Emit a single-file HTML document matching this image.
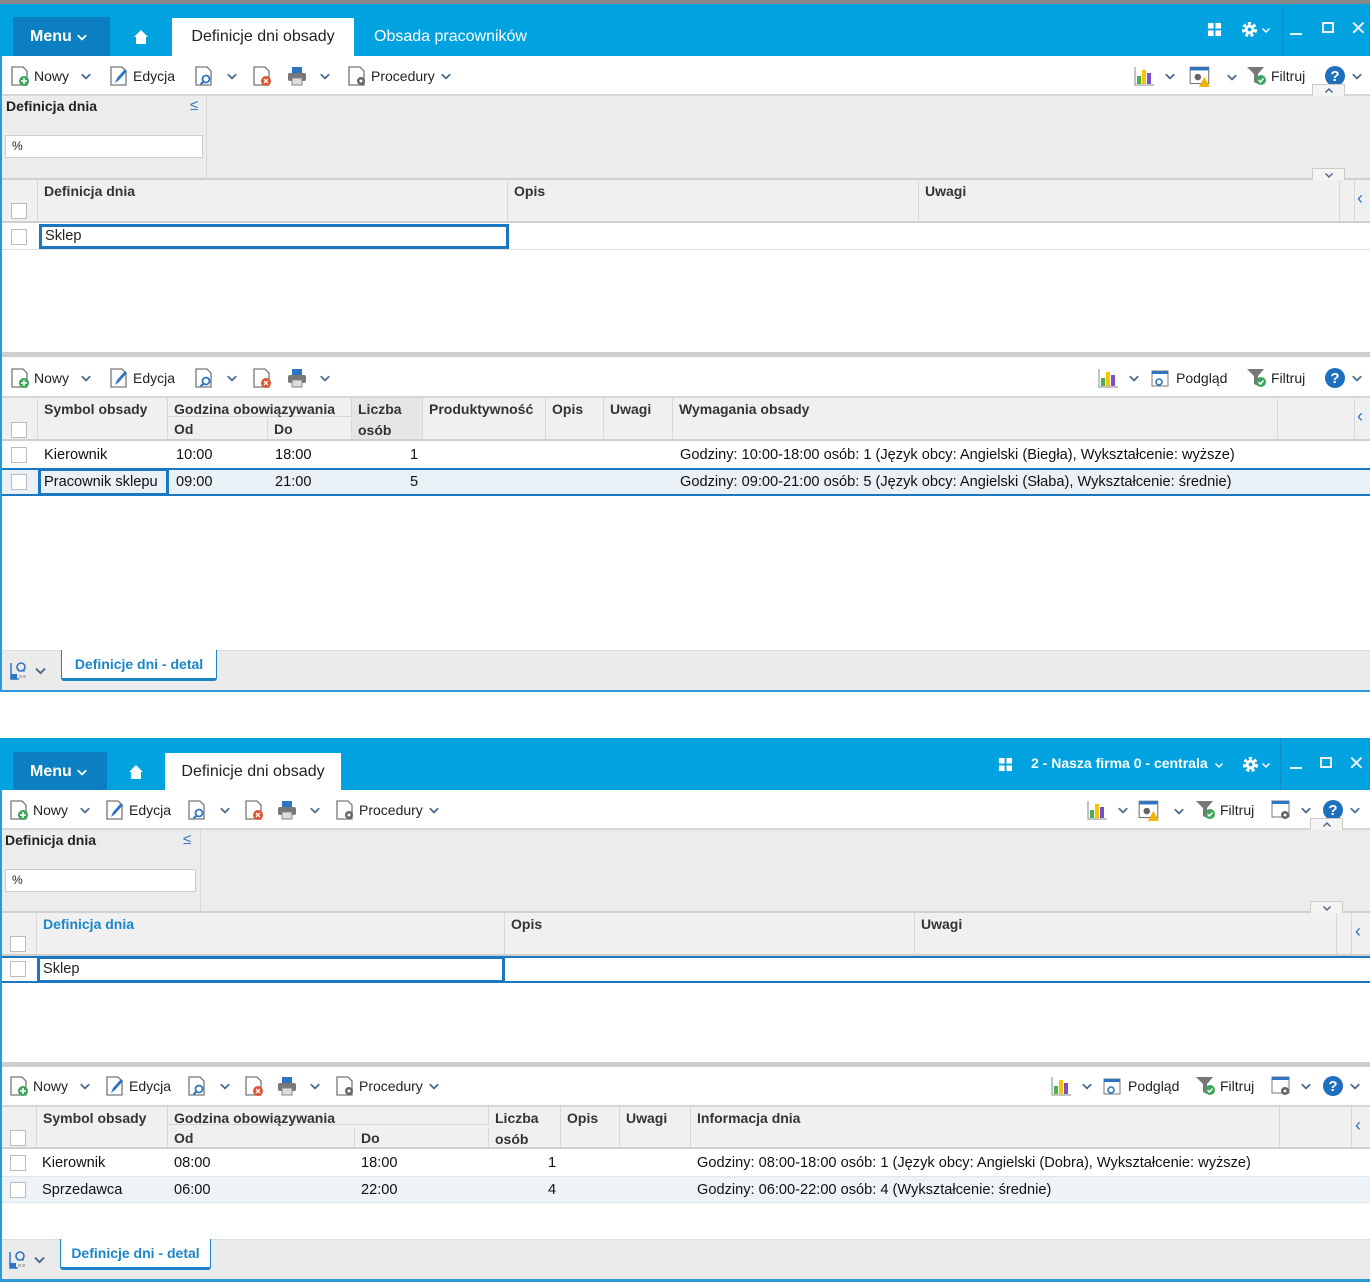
<!DOCTYPE html>
<html><head><meta charset="utf-8">
<style>
*{box-sizing:border-box;margin:0;padding:0}
body{width:1370px;height:1282px;position:relative;background:#fff;font-family:"Liberation Sans",Arial,sans-serif;font-size:14px;color:#222;overflow:hidden}
.a{position:absolute}
.blue{background:#00a3e0}
.menu{background:#0b7fc1;color:#fff;font-weight:bold;font-size:16px;padding-left:17px;line-height:39px}
.tab{background:#fff;font-size:16px;line-height:38px;text-align:center;color:#222}
.tb{background:#fff;border-bottom:2px solid #d6d6d6}
.filt{background:#ececec;border-bottom:2px solid #d0d0d0}
.hdr{background:#f0f0f0;border-bottom:2px solid #cfcfcf}
.col{position:absolute;top:0;bottom:0;border-right:1px solid #d8d8d8;font-weight:bold;color:#333;padding:3px 6px;font-size:14px}
.cb{position:absolute;width:16px;height:16px;border:1px solid #bbb;background:#fff}
.cell{position:absolute;font-size:14.6px;color:#111}
.bbar{background:#ebebeb;border-top:1px solid #ddd}
.dtab{background:#fff;border:1px solid #1a86c8;border-top:none;border-bottom:3px solid #1a86c8;border-radius:0 0 3px 3px;color:#1a86c8;font-weight:bold;text-align:center;line-height:28px;font-size:14px}
.ti{position:absolute;display:flex;align-items:center;gap:3px;font-size:14px;color:#222}
svg{display:block}
</style></head><body>
<svg width="0" height="0" style="position:absolute">
<defs>
<symbol id="chev" viewBox="0 0 10 10"><polyline points="1.5,3.5 5,7 8.5,3.5" fill="none" stroke="#4a6a90" stroke-width="1.5"/></symbol>
<symbol id="chevw" viewBox="0 0 10 10"><polyline points="1.5,3.5 5,7 8.5,3.5" fill="none" stroke="#fff" stroke-width="1.5"/></symbol>
<symbol id="new" viewBox="0 0 22 22"><path d="M3 2h11l4 4v14H3z" fill="#fff" stroke="#777" stroke-width="1.3"/><circle cx="15" cy="16" r="5" fill="#3da35a"/><path d="M15 13v6M12 16h6" stroke="#fff" stroke-width="1.6"/></symbol>
<symbol id="edit" viewBox="0 0 22 22"><path d="M3 2h11l4 4v14H3z" fill="#fff" stroke="#777" stroke-width="1.3"/><path d="M7 18l2-5 8-9 2 2-8 9z" fill="#2d74c4"/></symbol>
<symbol id="find" viewBox="0 0 22 22"><path d="M3 2h11l4 4v14H3z" fill="#fff" stroke="#777" stroke-width="1.3"/><circle cx="13" cy="14" r="3.5" fill="none" stroke="#2d74c4" stroke-width="1.8"/><path d="M10.5 16.5l-3 3" stroke="#2d74c4" stroke-width="2"/></symbol>
<symbol id="del" viewBox="0 0 22 22"><path d="M3 2h11l4 4v14H3z" fill="#fff" stroke="#777" stroke-width="1.3"/><circle cx="15" cy="16" r="5" fill="#e0512f"/><path d="M13 14l4 4M17 14l-4 4" stroke="#fff" stroke-width="1.4"/></symbol>
<symbol id="proc" viewBox="0 0 22 22"><path d="M3 2h11l4 4v14H3z" fill="#fff" stroke="#777" stroke-width="1.3"/><circle cx="15" cy="16" r="4" fill="#666"/><circle cx="15" cy="16" r="1.5" fill="#fff"/></symbol>
<symbol id="print" viewBox="0 0 22 22"><rect x="6" y="2" width="10" height="6" fill="#2d74c4"/><rect x="2" y="8" width="18" height="8" rx="2" fill="#777"/><rect x="6" y="13" width="10" height="7" fill="#ddd" stroke="#888"/></symbol>
<symbol id="chart" viewBox="0 0 22 22"><path d="M2 2v18h19" stroke="#888" fill="none"/><rect x="4" y="11" width="4" height="8" fill="#4caf50"/><rect x="9" y="5" width="4" height="14" fill="#f7c600"/><rect x="14" y="8" width="4" height="11" fill="#7b4fc9"/></symbol>
<symbol id="filter" viewBox="0 0 22 22"><path d="M1 2h17l-6 7v10l-4-2V9z" fill="#777"/><circle cx="15" cy="15" r="5" fill="#3da35a"/><path d="M12.5 15l2 2 3-3.5" stroke="#fff" stroke-width="1.5" fill="none"/></symbol>
<symbol id="help" viewBox="0 0 22 22"><circle cx="11" cy="11" r="10" fill="#1f6fbf"/><text x="11" y="16" text-anchor="middle" font-family="Liberation Sans" font-weight="bold" font-size="15" fill="#fff">?</text></symbol>
<symbol id="win" viewBox="0 0 22 22"><rect x="2" y="2" width="17" height="15" fill="#fff" stroke="#777"/><rect x="2" y="2" width="17" height="3" fill="#2d74c4"/><circle cx="9" cy="11" r="3" fill="#666"/><path d="M15 11l5 9h-10z" fill="#f0b400"/></symbol>
<symbol id="wing" viewBox="0 0 22 22"><rect x="2" y="2" width="17" height="16" fill="#fff" stroke="#777"/><rect x="2" y="2" width="17" height="3" fill="#2d74c4"/><circle cx="15" cy="16" r="4" fill="#666"/><circle cx="15" cy="16" r="1.4" fill="#fff"/></symbol>
<symbol id="prev" viewBox="0 0 22 22"><rect x="2" y="4" width="16" height="15" fill="#fff" stroke="#777"/><rect x="2" y="4" width="16" height="3" fill="#2d74c4"/><circle cx="9" cy="15" r="3" fill="none" stroke="#2d74c4" stroke-width="1.6"/></symbol>
<symbol id="grid" viewBox="0 0 16 16"><rect x="1" y="1" width="6" height="6" fill="#fff"/><rect x="9" y="1" width="6" height="6" fill="#fff"/><rect x="1" y="9" width="6" height="6" fill="#fff"/><rect x="9" y="9" width="6" height="6" fill="#fff"/></symbol>
<symbol id="gear" viewBox="0 0 20 20"><circle cx="10" cy="10" r="6" fill="none" stroke="#fff" stroke-width="4" stroke-dasharray="3 2.3"/><circle cx="10" cy="10" r="5" fill="#fff"/><circle cx="10" cy="10" r="2" fill="#00a3e0"/></symbol>
<symbol id="home" viewBox="0 0 16 16"><path d="M8 1l7 7h-2v7H3V8H1z" fill="#fff"/></symbol>
<symbol id="lupa" viewBox="0 0 22 22"><path d="M2 4v16h8" stroke="#2d74c4" fill="none" stroke-width="1.5"/><rect x="2" y="15" width="6" height="5" fill="#2d74c4"/><circle cx="12" cy="8" r="4" fill="none" stroke="#2d74c4" stroke-width="1.6"/><path d="M9 12h7" stroke="#2d74c4"/><rect x="10" y="16" width="3" height="3" fill="#bbb"/><rect x="14" y="16" width="3" height="3" fill="#bbb"/></symbol>
</defs></svg>

<!-- ========== WINDOW 1 ========== -->
<div class="a" style="left:0;top:0;width:1370px;height:4px;background:#888"></div>
<div class="a blue" style="left:0;top:4px;width:1370px;height:52px"></div>
<div class="a menu" style="left:13px;top:17px;width:97px;height:39px">Menu <svg style="display:inline;vertical-align:middle" width="12" height="12"><use href="#chevw"/></svg></div>
<svg class="a" style="left:133px;top:29px" width="16" height="16"><use href="#home"/></svg>
<div class="a tab" style="left:172px;top:18px;width:182px;height:38px">Definicje dni obsady</div>
<div class="a" style="left:374px;top:18px;line-height:38px;font-size:16px;color:#fff">Obsada pracowników</div>
<svg class="a" style="left:1207px;top:22px" width="15" height="15"><use href="#grid"/></svg>
<svg class="a" style="left:1240px;top:20px" width="19" height="19"><use href="#gear"/></svg>
<svg class="a" style="left:1261px;top:25px" width="10" height="10"><use href="#chevw"/></svg>
<div class="a" style="left:1282px;top:4px;width:1px;height:52px;background:#0a8cc4"></div>
<div class="a" style="left:1290px;top:33px;width:12px;height:2px;background:#dff"></div>
<div class="a" style="left:1322px;top:22px;width:12px;height:11px;border:2px solid #eef"></div>
<div class="a" style="left:1350px;top:16px;color:#eef;font-size:20px">✕</div>

<div class="a tb" style="left:0;top:56px;width:1370px;height:40px"></div>
<div class="ti" style="left:9px;top:65px"><svg width="22" height="22"><use href="#new"/></svg>Nowy<svg width="12" height="12" style="margin-left:8px"><use href="#chev"/></svg></div>
<div class="ti" style="left:108px;top:65px"><svg width="22" height="22"><use href="#edit"/></svg>Edycja</div>
<div class="ti" style="left:193px;top:65px"><svg width="22" height="22"><use href="#find"/></svg><svg width="12" height="12" style="margin-left:8px"><use href="#chev"/></svg></div>
<div class="ti" style="left:251px;top:65px"><svg width="22" height="22"><use href="#del"/></svg></div>
<div class="ti" style="left:286px;top:65px"><svg width="22" height="22"><use href="#print"/></svg><svg width="12" height="12" style="margin-left:8px"><use href="#chev"/></svg></div>
<div class="ti" style="left:346px;top:65px"><svg width="22" height="22"><use href="#proc"/></svg>Procedury<svg width="12" height="12" style="margin-left:2px"><use href="#chev"/></svg></div>
<div class="ti" style="left:1133px;top:65px"><svg width="22" height="22"><use href="#chart"/></svg><svg width="12" height="12" style="margin-left:6px"><use href="#chev"/></svg></div>
<div class="ti" style="left:1187px;top:65px"><svg width="26" height="24"><use href="#win"/></svg><svg width="12" height="12" style="margin-left:10px"><use href="#chev"/></svg></div>
<div class="ti" style="left:1246px;top:65px"><svg width="22" height="22"><use href="#filter"/></svg>Filtruj</div>
<div class="ti" style="left:1324px;top:65px"><svg width="22" height="22"><use href="#help"/></svg><svg width="12" height="12" style="margin-left:2px"><use href="#chev"/></svg></div>

<div class="a filt" style="left:0;top:96px;width:1370px;height:84px"></div>
<div class="a" style="left:206px;top:96px;width:1px;height:84px;background:#d8d8d8"></div>
<div class="a" style="left:6px;top:98px;font-weight:bold">Definicja dnia</div>
<div class="a" style="left:190px;top:97px;color:#2d74c4;font-size:15px">≤</div>
<div class="a" style="left:5px;top:135px;width:198px;height:23px;background:#fff;border:1px solid #ccc;font-size:12px;padding:3px 6px">%</div>
<div class="a" style="left:1312px;top:84px;width:33px;height:12px;background:#f4f4f4;border:1px solid #ccc;border-bottom:none"><svg style="margin:1px auto" width="12" height="10"><use href="#chev" transform="rotate(180 6 5)"/></svg></div>
<div class="a" style="left:1312px;top:168px;width:33px;height:12px;background:#f4f4f4;border:1px solid #ccc;border-bottom:none"><svg style="margin:1px auto" width="12" height="10"><use href="#chev"/></svg></div>

<div class="a hdr" style="left:0;top:180px;width:1370px;height:43px">
<div class="col" style="left:0;width:38px"></div>
<div class="col" style="left:38px;width:470px">Definicja dnia</div>
<div class="col" style="left:508px;width:411px">Opis</div>
<div class="col" style="left:919px;width:421px">Uwagi</div>
<div class="col" style="left:1340px;width:15px"></div>
<div class="a" style="left:1357px;top:8px;color:#2d74c4;font-size:18px">‹</div>
</div>
<div class="cb" style="left:11px;top:203px"></div>
<div class="a" style="left:0;top:249px;width:1370px;height:1px;background:#e0e0e0"></div>
<div class="cb" style="left:11px;top:229px"></div>
<div class="a" style="left:39px;top:224px;width:470px;height:25px;border:3px solid #1a78c2;padding:1px 3px;font-size:14.6px">Sklep</div>

<div class="a" style="left:0;top:352px;width:1370px;height:5px;background:#cfcfcf"></div>
<div class="a tb" style="left:0;top:357px;width:1370px;height:41px"></div>
<div class="ti" style="left:9px;top:367px"><svg width="22" height="22"><use href="#new"/></svg>Nowy<svg width="12" height="12" style="margin-left:8px"><use href="#chev"/></svg></div>
<div class="ti" style="left:108px;top:367px"><svg width="22" height="22"><use href="#edit"/></svg>Edycja</div>
<div class="ti" style="left:193px;top:367px"><svg width="22" height="22"><use href="#find"/></svg><svg width="12" height="12" style="margin-left:8px"><use href="#chev"/></svg></div>
<div class="ti" style="left:251px;top:367px"><svg width="22" height="22"><use href="#del"/></svg></div>
<div class="ti" style="left:286px;top:367px"><svg width="22" height="22"><use href="#print"/></svg><svg width="12" height="12" style="margin-left:8px"><use href="#chev"/></svg></div>
<div class="ti" style="left:1097px;top:367px"><svg width="22" height="22"><use href="#chart"/></svg><svg width="12" height="12" style="margin-left:6px"><use href="#chev"/></svg></div>
<div class="ti" style="left:1149px;top:367px"><svg width="24" height="22"><use href="#prev"/></svg>Podgląd</div>
<div class="ti" style="left:1246px;top:367px"><svg width="22" height="22"><use href="#filter"/></svg>Filtruj</div>
<div class="ti" style="left:1324px;top:367px"><svg width="22" height="22"><use href="#help"/></svg><svg width="12" height="12" style="margin-left:2px"><use href="#chev"/></svg></div>

<div class="a hdr" style="left:0;top:398px;width:1370px;height:43px">
<div class="col" style="left:0;width:38px"></div>
<div class="col" style="left:38px;width:130px">Symbol obsady</div>
<div class="col" style="left:168px;width:184px;bottom:22px;border-bottom:1px solid #d8d8d8">Godzina obowiązywania</div>
<div class="col" style="left:168px;top:21px;width:100px;padding-top:2px">Od</div>
<div class="col" style="left:268px;top:21px;width:84px;padding-top:2px">Do</div>
<div class="col" style="left:352px;width:71px;line-height:21px;padding-top:1px;background:#e6e6e6">Liczba<br>osób</div>
<div class="col" style="left:423px;width:123px">Produktywność</div>
<div class="col" style="left:546px;width:58px">Opis</div>
<div class="col" style="left:604px;width:69px">Uwagi</div>
<div class="col" style="left:673px;width:605px">Wymagania obsady</div>
<div class="col" style="left:1278px;width:77px"></div>
<div class="a" style="left:1357px;top:8px;color:#2d74c4;font-size:18px">‹</div>
</div>
<div class="cb" style="left:11px;top:422px"></div>
<div class="cb" style="left:11px;top:447px"></div>
<div class="cell" style="left:44px;top:447px">Kierownik</div>
<div class="cell" style="left:176px;top:447px">10:00</div>
<div class="cell" style="left:275px;top:447px">18:00</div>
<div class="cell" style="left:410px;top:447px">1</div>
<div class="cell" style="left:680px;top:447px">Godziny: 10:00-18:00 osób: 1 (Język obcy: Angielski (Biegła), Wykształcenie: wyższe)</div>
<div class="a" style="left:0;top:468px;width:1370px;height:28px;background:#e9f1f7;border-top:2px solid #1a78c2;border-bottom:2px solid #1a78c2"></div>
<div class="cb" style="left:11px;top:474px"></div>
<div class="a" style="left:38px;top:468px;width:131px;height:28px;border:3px solid #1a78c2"></div>
<div class="cell" style="left:44px;top:474px">Pracownik sklepu</div>
<div class="cell" style="left:176px;top:474px">09:00</div>
<div class="cell" style="left:275px;top:474px">21:00</div>
<div class="cell" style="left:410px;top:474px">5</div>
<div class="cell" style="left:680px;top:474px">Godziny: 09:00-21:00 osób: 5 (Język obcy: Angielski (Słaba), Wykształcenie: średnie)</div>

<div class="a bbar" style="left:0;top:650px;width:1370px;height:40px"></div>
<svg class="a" style="left:9px;top:659px" width="22" height="22"><use href="#lupa"/></svg>
<svg class="a" style="left:34px;top:664px" width="13" height="13"><use href="#chev"/></svg>
<div class="a dtab" style="left:61px;top:650px;width:156px;height:31px">Definicje dni - detal</div>
<div class="a" style="left:0;top:690px;width:1370px;height:2px;background:#2a9ad6"></div>
<div class="a" style="left:0;top:56px;width:2px;height:636px;background:#2a9ad6"></div>

<!-- ========== WINDOW 2 ========== -->
<div class="a blue" style="left:0;top:738px;width:1370px;height:52px"></div>
<div class="a menu" style="left:13px;top:752px;width:94px;height:38px">Menu <svg style="display:inline;vertical-align:middle" width="12" height="12"><use href="#chevw"/></svg></div>
<svg class="a" style="left:128px;top:764px" width="16" height="16"><use href="#home"/></svg>
<div class="a tab" style="left:165px;top:753px;width:176px;height:37px">Definicje dni obsady</div>
<svg class="a" style="left:998px;top:757px" width="15" height="15"><use href="#grid"/></svg>
<div class="a" style="left:1031px;top:755px;color:#fff;font-weight:bold;font-size:14px">2 - Nasza firma 0 - centrala</div>
<svg class="a" style="left:1214px;top:760px" width="10" height="10"><use href="#chevw"/></svg>
<svg class="a" style="left:1241px;top:755px" width="19" height="19"><use href="#gear"/></svg>
<svg class="a" style="left:1261px;top:760px" width="10" height="10"><use href="#chevw"/></svg>
<div class="a" style="left:1280px;top:738px;width:1px;height:52px;background:#0a8cc4"></div>
<div class="a" style="left:1290px;top:767px;width:12px;height:2px;background:#dff"></div>
<div class="a" style="left:1320px;top:757px;width:12px;height:11px;border:2px solid #eef"></div>
<div class="a" style="left:1348px;top:751px;color:#eef;font-size:20px">✕</div>

<div class="a tb" style="left:0;top:790px;width:1370px;height:40px"></div>
<div class="ti" style="left:8px;top:799px"><svg width="22" height="22"><use href="#new"/></svg>Nowy<svg width="12" height="12" style="margin-left:8px"><use href="#chev"/></svg></div>
<div class="ti" style="left:104px;top:799px"><svg width="22" height="22"><use href="#edit"/></svg>Edycja</div>
<div class="ti" style="left:186px;top:799px"><svg width="22" height="22"><use href="#find"/></svg><svg width="12" height="12" style="margin-left:8px"><use href="#chev"/></svg></div>
<div class="ti" style="left:243px;top:799px"><svg width="22" height="22"><use href="#del"/></svg></div>
<div class="ti" style="left:276px;top:799px"><svg width="22" height="22"><use href="#print"/></svg><svg width="12" height="12" style="margin-left:8px"><use href="#chev"/></svg></div>
<div class="ti" style="left:334px;top:799px"><svg width="22" height="22"><use href="#proc"/></svg>Procedury<svg width="12" height="12" style="margin-left:2px"><use href="#chev"/></svg></div>
<div class="ti" style="left:1086px;top:799px"><svg width="22" height="22"><use href="#chart"/></svg><svg width="12" height="12" style="margin-left:6px"><use href="#chev"/></svg></div>
<div class="ti" style="left:1136px;top:799px"><svg width="26" height="24"><use href="#win"/></svg><svg width="12" height="12" style="margin-left:8px"><use href="#chev"/></svg></div>
<div class="ti" style="left:1195px;top:799px"><svg width="22" height="22"><use href="#filter"/></svg>Filtruj</div>
<div class="ti" style="left:1269px;top:799px"><svg width="24" height="22"><use href="#wing"/></svg><svg width="12" height="12" style="margin-left:4px"><use href="#chev"/></svg></div>
<div class="ti" style="left:1322px;top:799px"><svg width="22" height="22"><use href="#help"/></svg><svg width="12" height="12" style="margin-left:2px"><use href="#chev"/></svg></div>

<div class="a filt" style="left:0;top:830px;width:1370px;height:83px"></div>
<div class="a" style="left:200px;top:830px;width:1px;height:83px;background:#d8d8d8"></div>
<div class="a" style="left:5px;top:832px;font-weight:bold">Definicja dnia</div>
<div class="a" style="left:183px;top:831px;color:#2d74c4;font-size:15px">≤</div>
<div class="a" style="left:5px;top:869px;width:191px;height:23px;background:#fff;border:1px solid #ccc;font-size:12px;padding:3px 6px">%</div>
<div class="a" style="left:1310px;top:818px;width:33px;height:12px;background:#f4f4f4;border:1px solid #ccc;border-bottom:none"><svg style="margin:1px auto" width="12" height="10"><use href="#chev" transform="rotate(180 6 5)"/></svg></div>
<div class="a" style="left:1310px;top:901px;width:33px;height:12px;background:#f4f4f4;border:1px solid #ccc;border-bottom:none"><svg style="margin:1px auto" width="12" height="10"><use href="#chev"/></svg></div>

<div class="a hdr" style="left:0;top:913px;width:1370px;height:43px">
<div class="col" style="left:0;width:37px"></div>
<div class="col" style="left:37px;width:468px;color:#1a86c8">Definicja dnia</div>
<div class="col" style="left:505px;width:410px">Opis</div>
<div class="col" style="left:915px;width:422px">Uwagi</div>
<div class="col" style="left:1337px;width:15px"></div>
<div class="a" style="left:1355px;top:8px;color:#2d74c4;font-size:18px">‹</div>
</div>
<div class="cb" style="left:10px;top:936px"></div>
<div class="a" style="left:0;top:956px;width:1370px;height:27px;border-top:2px solid #1a78c2;border-bottom:2px solid #1a78c2"></div>
<div class="cb" style="left:10px;top:961px"></div>
<div class="a" style="left:37px;top:956px;width:468px;height:27px;border:3px solid #1a78c2;padding:2px 3px;font-size:14.6px">Sklep</div>

<div class="a" style="left:0;top:1062px;width:1370px;height:5px;background:#cfcfcf"></div>
<div class="a tb" style="left:0;top:1067px;width:1370px;height:40px"></div>
<div class="ti" style="left:8px;top:1075px"><svg width="22" height="22"><use href="#new"/></svg>Nowy<svg width="12" height="12" style="margin-left:8px"><use href="#chev"/></svg></div>
<div class="ti" style="left:104px;top:1075px"><svg width="22" height="22"><use href="#edit"/></svg>Edycja</div>
<div class="ti" style="left:186px;top:1075px"><svg width="22" height="22"><use href="#find"/></svg><svg width="12" height="12" style="margin-left:8px"><use href="#chev"/></svg></div>
<div class="ti" style="left:243px;top:1075px"><svg width="22" height="22"><use href="#del"/></svg></div>
<div class="ti" style="left:276px;top:1075px"><svg width="22" height="22"><use href="#print"/></svg><svg width="12" height="12" style="margin-left:8px"><use href="#chev"/></svg></div>
<div class="ti" style="left:334px;top:1075px"><svg width="22" height="22"><use href="#proc"/></svg>Procedury<svg width="12" height="12" style="margin-left:2px"><use href="#chev"/></svg></div>
<div class="ti" style="left:1050px;top:1075px"><svg width="22" height="22"><use href="#chart"/></svg><svg width="12" height="12" style="margin-left:6px"><use href="#chev"/></svg></div>
<div class="ti" style="left:1101px;top:1075px"><svg width="24" height="22"><use href="#prev"/></svg>Podgląd</div>
<div class="ti" style="left:1195px;top:1075px"><svg width="22" height="22"><use href="#filter"/></svg>Filtruj</div>
<div class="ti" style="left:1269px;top:1075px"><svg width="24" height="22"><use href="#wing"/></svg><svg width="12" height="12" style="margin-left:4px"><use href="#chev"/></svg></div>
<div class="ti" style="left:1322px;top:1075px"><svg width="22" height="22"><use href="#help"/></svg><svg width="12" height="12" style="margin-left:2px"><use href="#chev"/></svg></div>

<div class="a hdr" style="left:0;top:1107px;width:1370px;height:42px">
<div class="col" style="left:0;width:37px"></div>
<div class="col" style="left:37px;width:131px">Symbol obsady</div>
<div class="col" style="left:168px;width:321px;bottom:22px;border-bottom:1px solid #d8d8d8">Godzina obowiązywania</div>
<div class="col" style="left:168px;top:21px;width:187px;padding-top:2px">Od</div>
<div class="col" style="left:355px;top:21px;width:134px;padding-top:2px">Do</div>
<div class="col" style="left:489px;width:72px;line-height:21px;padding-top:1px">Liczba<br>osób</div>
<div class="col" style="left:561px;width:59px">Opis</div>
<div class="col" style="left:620px;width:71px">Uwagi</div>
<div class="col" style="left:691px;width:589px">Informacja dnia</div>
<div class="col" style="left:1280px;width:72px"></div>
<div class="a" style="left:1355px;top:8px;color:#2d74c4;font-size:18px">‹</div>
</div>
<div class="cb" style="left:10px;top:1130px"></div>
<div class="cb" style="left:10px;top:1155px"></div>
<div class="cell" style="left:42px;top:1155px">Kierownik</div>
<div class="cell" style="left:174px;top:1155px">08:00</div>
<div class="cell" style="left:361px;top:1155px">18:00</div>
<div class="cell" style="left:548px;top:1155px">1</div>
<div class="cell" style="left:697px;top:1155px">Godziny: 08:00-18:00 osób: 1 (Język obcy: Angielski (Dobra), Wykształcenie: wyższe)</div>
<div class="a" style="left:0;top:1176px;width:1370px;height:27px;background:#eef3f7;border-top:1px solid #dde6ee;border-bottom:1px solid #dde6ee"></div>
<div class="cb" style="left:10px;top:1182px"></div>
<div class="cell" style="left:42px;top:1182px">Sprzedawca</div>
<div class="cell" style="left:174px;top:1182px">06:00</div>
<div class="cell" style="left:361px;top:1182px">22:00</div>
<div class="cell" style="left:548px;top:1182px">4</div>
<div class="cell" style="left:697px;top:1182px">Godziny: 06:00-22:00 osób: 4 (Wykształcenie: średnie)</div>

<div class="a bbar" style="left:0;top:1239px;width:1370px;height:40px"></div>
<svg class="a" style="left:8px;top:1248px" width="22" height="22"><use href="#lupa"/></svg>
<svg class="a" style="left:33px;top:1253px" width="13" height="13"><use href="#chev"/></svg>
<div class="a dtab" style="left:60px;top:1239px;width:151px;height:31px">Definicje dni - detal</div>
<div class="a" style="left:0;top:1279px;width:1370px;height:3px;background:#2a9ad6"></div>
<div class="a" style="left:0;top:790px;width:2px;height:492px;background:#2a9ad6"></div>
</body></html>
